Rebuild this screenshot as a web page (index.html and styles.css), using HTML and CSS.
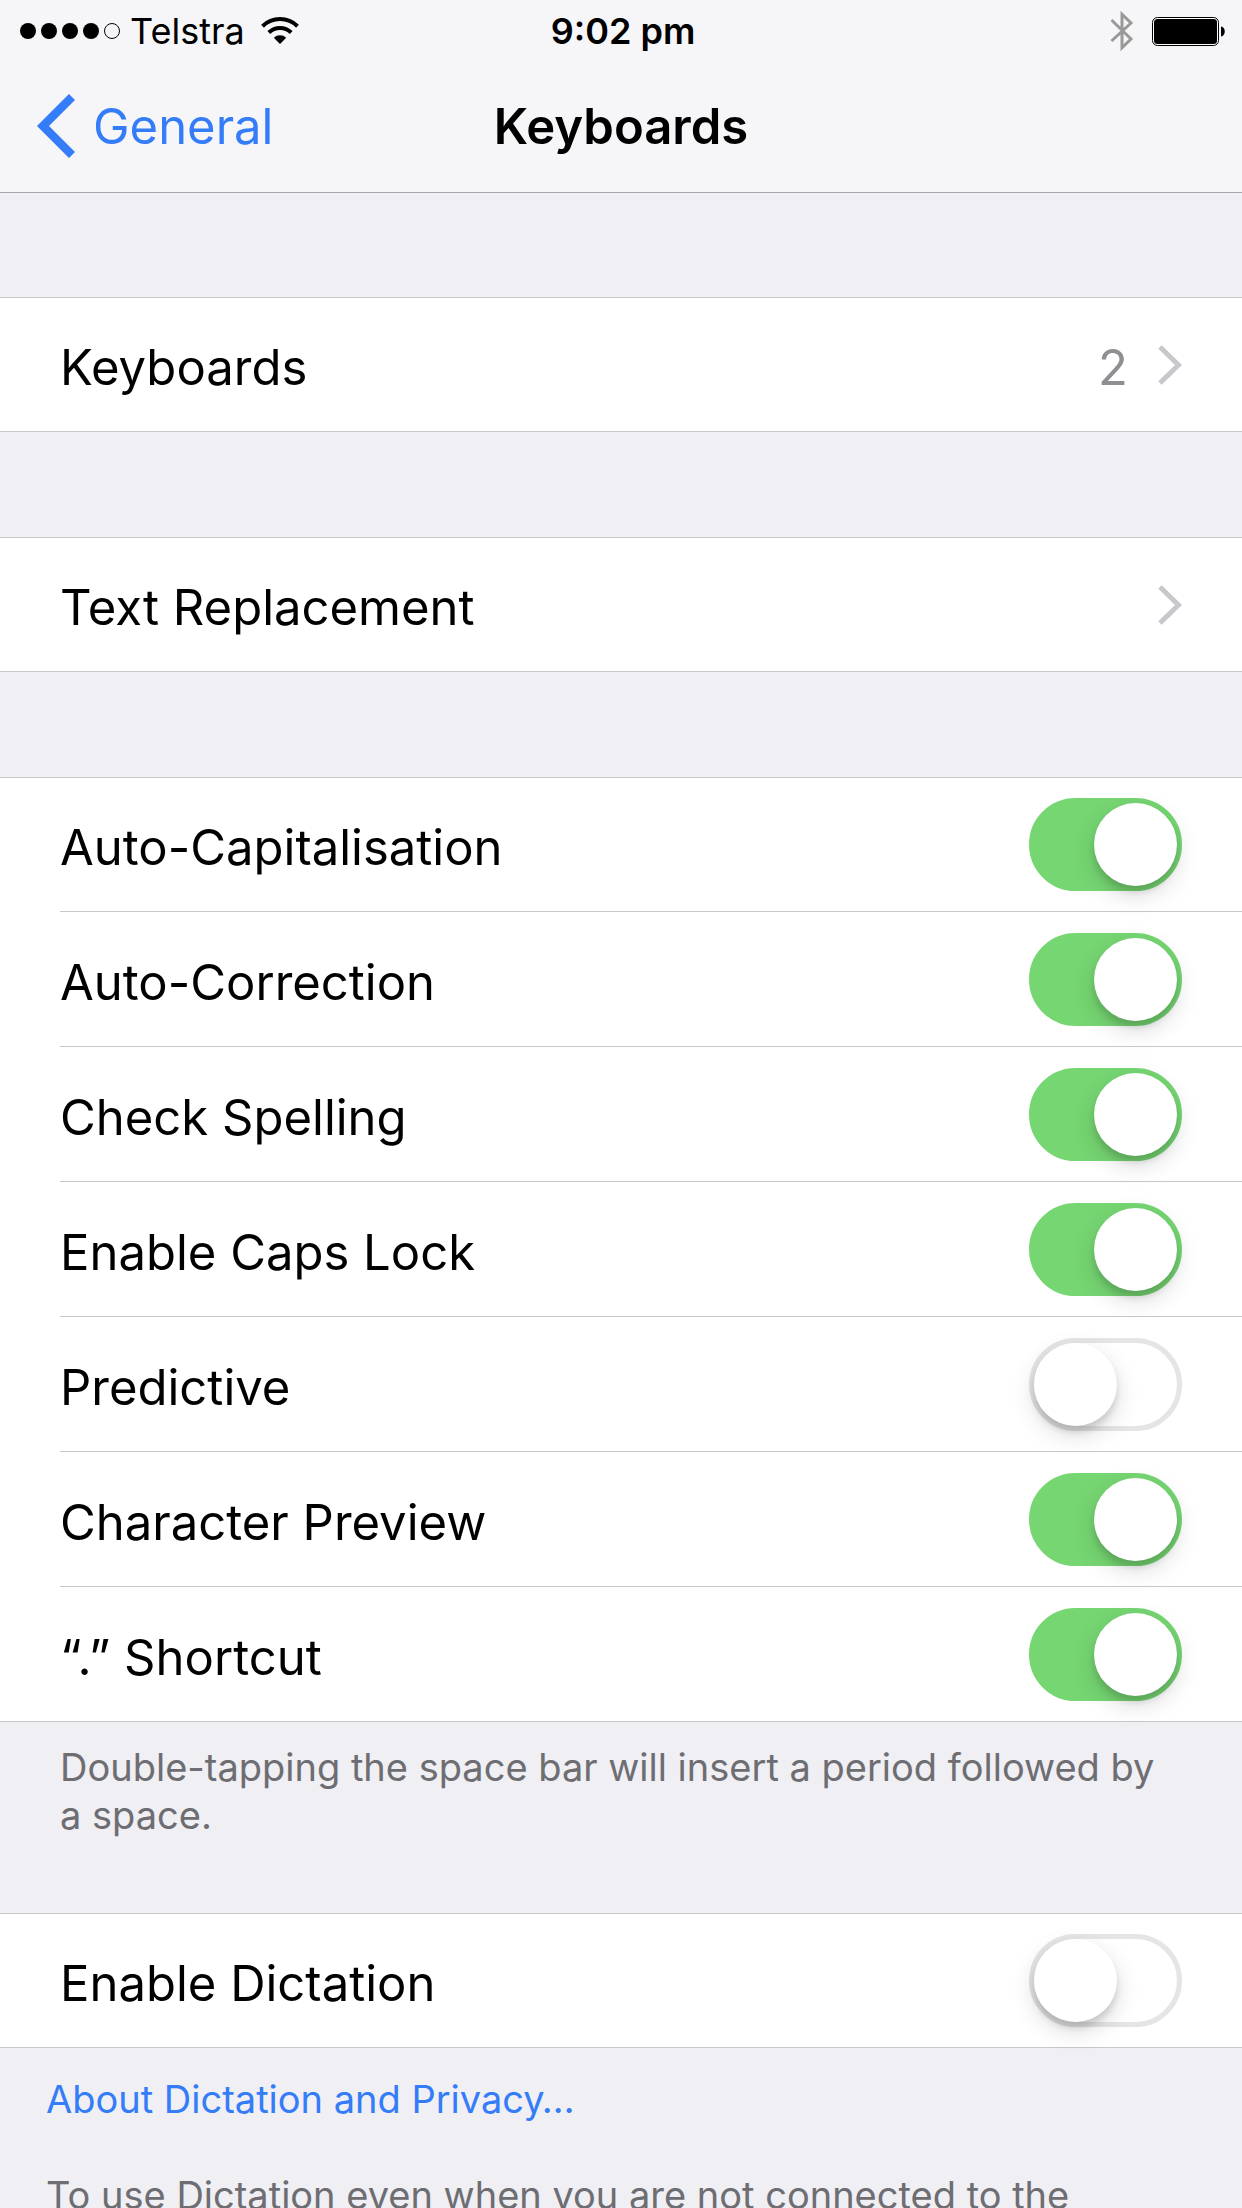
FILE: index.html
```html
<!DOCTYPE html>
<html lang="en-AU">
<head>
<meta charset="utf-8">
<meta name="viewport" content="width=device-width, initial-scale=1">
<title>Keyboards</title>
<link rel="stylesheet" href="styles.css">
</head>
<body>
<div class="screen">
  <header class="header">
    <div class="status">
      <div class="status-left">
        <svg class="signal" width="100" height="16" viewBox="0 0 100 16" aria-label="Signal 4 of 5">
          <circle cx="8" cy="8" r="8"/><circle cx="29" cy="8" r="8"/><circle cx="50" cy="8" r="8"/><circle cx="71" cy="8" r="8"/>
          <circle cx="92" cy="8" r="7.5" fill="none" stroke="#000"/>
        </svg>
        <span class="carrier">Telstra</span>
        <svg class="wifi" width="38" height="28" viewBox="0 0 38 28" aria-label="Wi-Fi">
          <g fill="none" stroke="#000" stroke-width="4">
            <path d="M1.500 9.200A25 25 0 0 1 36.500 9.200"/>
            <path d="M7.800 15.500A16 16 0 0 1 30.200 15.500"/>
          </g>
          <path d="M12.800 20.800A9 9 0 0 1 25.200 20.800L19 27Z"/>
        </svg>
      </div>
      <time class="clock">9:02 pm</time>
      <div class="status-right">
        <svg width="24" height="42" viewBox="0 0 24 42" aria-label="Bluetooth">
          <path d="M1.500 10L21 29L12 37.800V4.200L21 13L1.500 31" fill="none" stroke="#999" stroke-width="3"/>
        </svg>
        <svg width="74" height="29" viewBox="0 0 74 29" aria-label="Battery full">
          <rect x=".5" y=".5" width="66" height="28" rx="5" fill="#fff" stroke="#000"/>
          <rect x="2" y="2" width="63" height="25" rx="3.500"/>
          <path d="M69 9.500C74 10 74 19 69 19.500Z"/>
        </svg>
      </div>
    </div>
    <nav class="nav">
      <a class="back" href="#general">
        <svg width="39" height="64" viewBox="0 0 39 64" aria-hidden="true">
          <path d="M36 3L7 32L36 61" fill="none" stroke="#347cf8" stroke-width="8.500"/>
        </svg>
        <span>General</span>
      </a>
      <h1 class="title">Keyboards</h1>
    </nav>
  </header>

  <main class="content">
    <ul class="group">
      <li><a class="row" href="#keyboards">
        <span class="label">Keyboards</span>
        <span class="value">2</span>
        <svg class="chevron" width="24" height="40" viewBox="0 0 24 40" aria-hidden="true"><path d="M2 2L20.500 20L2 38"/></svg>
      </a></li>
    </ul>

    <ul class="group">
      <li><a class="row" href="#text-replacement">
        <span class="label">Text Replacement</span>
        <svg class="chevron" width="24" height="40" viewBox="0 0 24 40" aria-hidden="true"><path d="M2 2L20.500 20L2 38"/></svg>
      </a></li>
    </ul>

    <ul class="group">
      <li><label class="row"><span class="label">Auto-Capitalisation</span><input class="switch" type="checkbox" role="switch" checked></label></li>
      <li><label class="row"><span class="label">Auto-Correction</span><input class="switch" type="checkbox" role="switch" checked></label></li>
      <li><label class="row"><span class="label">Check Spelling</span><input class="switch" type="checkbox" role="switch" checked></label></li>
      <li><label class="row"><span class="label">Enable Caps Lock</span><input class="switch" type="checkbox" role="switch" checked></label></li>
      <li><label class="row"><span class="label">Predictive</span><input class="switch" type="checkbox" role="switch"></label></li>
      <li><label class="row"><span class="label">Character Preview</span><input class="switch" type="checkbox" role="switch" checked></label></li>
      <li><label class="row"><span class="label">“.” Shortcut</span><input class="switch" type="checkbox" role="switch" checked></label></li>
    </ul>
    <p class="note">Double-tapping the space bar will insert a period followed by a space.</p>

    <ul class="group">
      <li><label class="row"><span class="label">Enable Dictation</span><input class="switch" type="checkbox" role="switch"></label></li>
    </ul>
    <div class="note note-wide">
      <p><a class="link" href="#dictation-privacy">About Dictation and Privacy…</a></p>
      <p>To use Dictation even when you are not connected to the</p>
    </div>
  </main>
</div>
</body>
</html>
```
FILE: styles.css
```css
* {
  box-sizing: border-box;
}

body {
  margin: 0;
  background: #efeff4;
  color: #000;
  font-family: Inter, "Liberation Sans", sans-serif;
  font-size: 49px;
}

ul, p, h1 {
  margin: 0;
  padding: 0;
  list-style: none;
}

a {
  color: inherit;
  text-decoration: none;
}

svg {
  display: block;
  flex: none;
}

.screen {
  display: flex;
  flex-direction: column;
  height: 100vh;
}

/* Status bar and navigation bar */
.header {
  flex: none;
  background: #f6f6f8;
  border-bottom: 1px solid #a7a7aa;
}

.status,
.nav {
  display: grid;
  grid-template-columns: 1fr auto 1fr;
  align-items: center;
}

.status {
  height: 62px;
  padding: 0 16px 0 20px;
  font-size: 36px;
}

.status-left,
.status-right {
  display: flex;
  align-items: center;
}

.status-left {
  gap: 10px;
}

.wifi {
  margin-left: 6px;
}

.status-right {
  justify-content: flex-end;
  gap: 18px;
}

.clock {
  font-weight: 600;
}

.nav {
  height: 130px;
  padding: 0 36px 2px;
}

.back {
  display: flex;
  align-items: center;
  gap: 18px;
  color: #347cf8;
}

.title {
  font-size: 49px;
  font-weight: 600;
}

/* Settings list */
.content {
  flex: 1;
  min-height: 0;
  overflow-y: auto;
  scrollbar-width: none;
}

.group {
  margin-top: 105px;
  padding-left: 60px;
  background: #fff;
  border: solid #c8c7cc;
  border-width: 1px 0;
}

.group:first-child {
  margin-top: 104px;
}

.group li + li {
  border-top: 1px solid #c8c7cc;
}

.row {
  display: flex;
  align-items: center;
  height: 134px;
  padding-right: 60px;
}

.group li:first-child .row {
  height: 133px;
}

.label {
  flex: 1;
  padding-top: 6px;
}

.value {
  padding: 6px 30px 0 0;
  color: #8e8e93;
}

.chevron {
  fill: none;
  stroke: #c7c7cc;
  stroke-width: 5;
}

.switch {
  appearance: none;
  flex: none;
  width: 153px;
  height: 93px;
  margin: 0;
  border: 5px solid #e5e5e5;
  border-radius: 47px;
  background: #fff;
}

.switch::before {
  content: "";
  display: block;
  width: 83px;
  height: 83px;
  border-radius: 50%;
  background: #fff;
  box-shadow: 0 9px 24px rgba(0, 0, 0, 0.15), 0 6px 6px rgba(0, 0, 0, 0.12);
}

.switch:checked {
  border-color: #76d672;
  background: #76d672;
}

.switch:checked::before {
  margin-left: auto;
}

.note {
  padding: 21px 60px 0;
  color: #6d6d72;
  font-size: 38px;
  line-height: 48px;
}

.note + .group {
  margin-top: 74px;
}

.note-wide {
  display: grid;
  gap: 48px;
  padding: 27px 46px 0;
}

.link {
  color: #347cf8;
}
```
